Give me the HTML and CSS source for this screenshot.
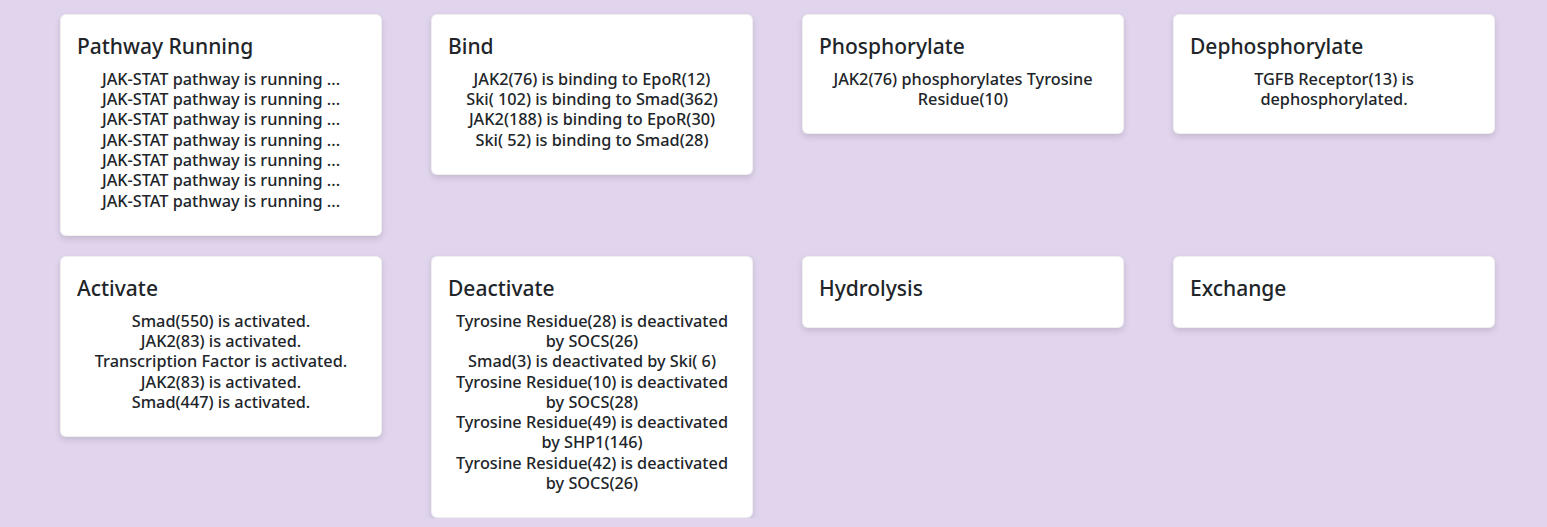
FILE: index.html
```html
<!DOCTYPE html>
<html lang="en">
<head>
<meta charset="utf-8">
<title>Pathway Events</title>
<link rel="stylesheet" href="styles.css">
</head>
<body>
<main class="board">
  <section class="card">
    <h4 class="card-title">Pathway Running</h4>
    <div class="card-text">
      <div>JAK-STAT pathway is running ...</div>
      <div>JAK-STAT pathway is running ...</div>
      <div>JAK-STAT pathway is running ...</div>
      <div>JAK-STAT pathway is running ...</div>
      <div>JAK-STAT pathway is running ...</div>
      <div>JAK-STAT pathway is running ...</div>
      <div>JAK-STAT pathway is running ...</div>
    </div>
  </section>
  <section class="card">
    <h4 class="card-title">Bind</h4>
    <div class="card-text">
      <div>JAK2(76) is binding to EpoR(12)</div>
      <div>Ski( 102) is binding to Smad(362)</div>
      <div>JAK2(188) is binding to EpoR(30)</div>
      <div>Ski( 52) is binding to Smad(28)</div>
    </div>
  </section>
  <section class="card">
    <h4 class="card-title">Phosphorylate</h4>
    <div class="card-text">
      <div>JAK2(76) phosphorylates Tyrosine Residue(10)</div>
    </div>
  </section>
  <section class="card">
    <h4 class="card-title">Dephosphorylate</h4>
    <div class="card-text">
      <div>TGFB Receptor(13) is dephosphorylated.</div>
    </div>
  </section>
  <section class="card">
    <h4 class="card-title">Activate</h4>
    <div class="card-text">
      <div>Smad(550) is activated.</div>
      <div>JAK2(83) is activated.</div>
      <div>Transcription Factor is activated.</div>
      <div>JAK2(83) is activated.</div>
      <div>Smad(447) is activated.</div>
    </div>
  </section>
  <section class="card">
    <h4 class="card-title">Deactivate</h4>
    <div class="card-text">
      <div>Tyrosine Residue(28) is deactivated by SOCS(26)</div>
      <div>Smad(3) is deactivated by Ski( 6)</div>
      <div>Tyrosine Residue(10) is deactivated by SOCS(28)</div>
      <div>Tyrosine Residue(49) is deactivated by SHP1(146)</div>
      <div>Tyrosine Residue(42) is deactivated by SOCS(26)</div>
    </div>
  </section>
  <section class="card">
    <h4 class="card-title">Hydrolysis</h4>
  </section>
  <section class="card">
    <h4 class="card-title">Exchange</h4>
  </section>
</main>
</body>
</html>
```

FILE: styles.css
```css
* { box-sizing: border-box; }

html, body {
  margin: 0;
  padding: 0;
  background: #e1d5ee;
}

body {
  font-family: "Noto Sans", "Open Sans", sans-serif;
  color: #212529;
}

.board {
  display: grid;
  grid-template-columns: repeat(4, 322px);
  column-gap: 49px;
  row-gap: 20px;
  align-items: start;
  padding: 14px 0 0 60px;
}

.card {
  background: #ffffff;
  border: 1px solid rgba(0, 0, 0, 0.06);
  border-radius: 6px;
  box-shadow: 0 3px 6px rgba(0, 0, 0, 0.13);
  padding: 17px 16px 16px;
}

.card-title {
  margin: 0 0 8px;
  font-size: 21px;
  font-weight: 500;
  line-height: 28.8px;
}

.card-text {
  margin-top: 1px;
  text-align: center;
  font-size: 16.3px;
  font-weight: 500;
  line-height: 20.3px;
  padding-bottom: 8px;
}
```
